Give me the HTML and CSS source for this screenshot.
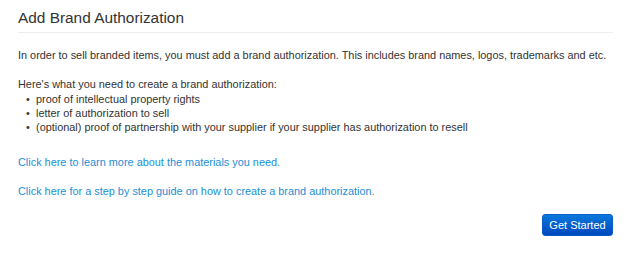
FILE: index.html
```html
<!DOCTYPE html>
<html lang="en">
<head>
    <meta charset="UTF-8">
    <title>Add Brand Authorization</title>
    <link rel="stylesheet" href="styles.css">
</head>
<body>
    <div class="panel">
        <h3 class="panel-title">Add Brand Authorization</h3>
        <div class="panel-body">
            <p>In order to sell branded items, you must add a brand authorization. This includes brand names, logos, trademarks and etc.</p>
            <p class="needs">Here's what you need to create a brand authorization:</p>
            <ul class="needs-list">
                <li>proof of intellectual property rights</li>
                <li>letter of authorization to sell</li>
                <li>(optional) proof of partnership with your supplier if your supplier has authorization to resell</li>
            </ul>
            <p class="link-row"><a href="#">Click here to learn more about the materials you need.</a></p>
            <p class="link-row"><a href="#">Click here for a step by step guide on how to create a brand authorization.</a></p>
        </div>
        <div class="panel-footer">
            <button class="btn-primary">Get Started</button>
        </div>
    </div>
</body>
</html>
```

FILE: styles.css
```css
body {
    margin: 0;
    font-family: 'Liberation Sans', Arial, sans-serif;
    font-size: 10.9px;
    line-height: 14px;
    color: #333;
    background: #fff;
}

.panel {
    width: 595px;
    padding: 0 28px 0 18px;
}

.panel-title {
    margin: 0;
    padding: 8px 0 4px;
    font-size: 15.4px;
    line-height: 20px;
    font-weight: normal;
    color: #333;
    border-bottom: 1px solid #eee;
}

.panel-body {
    padding-top: 15px;
}

.panel-body p {
    margin: 0 0 15px;
}

.panel-body .needs {
    margin: 0;
}

.needs-list {
    margin: 1px 0 21px;
    padding-left: 8px;
    list-style: none;
}

.needs-list li::before {
    content: "\2022";
    display: inline-block;
    width: 10px;
}

.link-row a {
    color: #1a8fd6;
    text-decoration: none;
}

.panel-footer {
    display: flex;
    justify-content: flex-end;
    padding-top: 1px;
}

.btn-primary {
    width: 71px;
    height: 22px;
    padding: 0;
    font-family: inherit;
    font-size: 11px;
    color: #fff;
    background: linear-gradient(#0a78db, #0047bf);
    border: 1px solid #0a5ec8;
    border-radius: 3px;
    cursor: pointer;
}
```
